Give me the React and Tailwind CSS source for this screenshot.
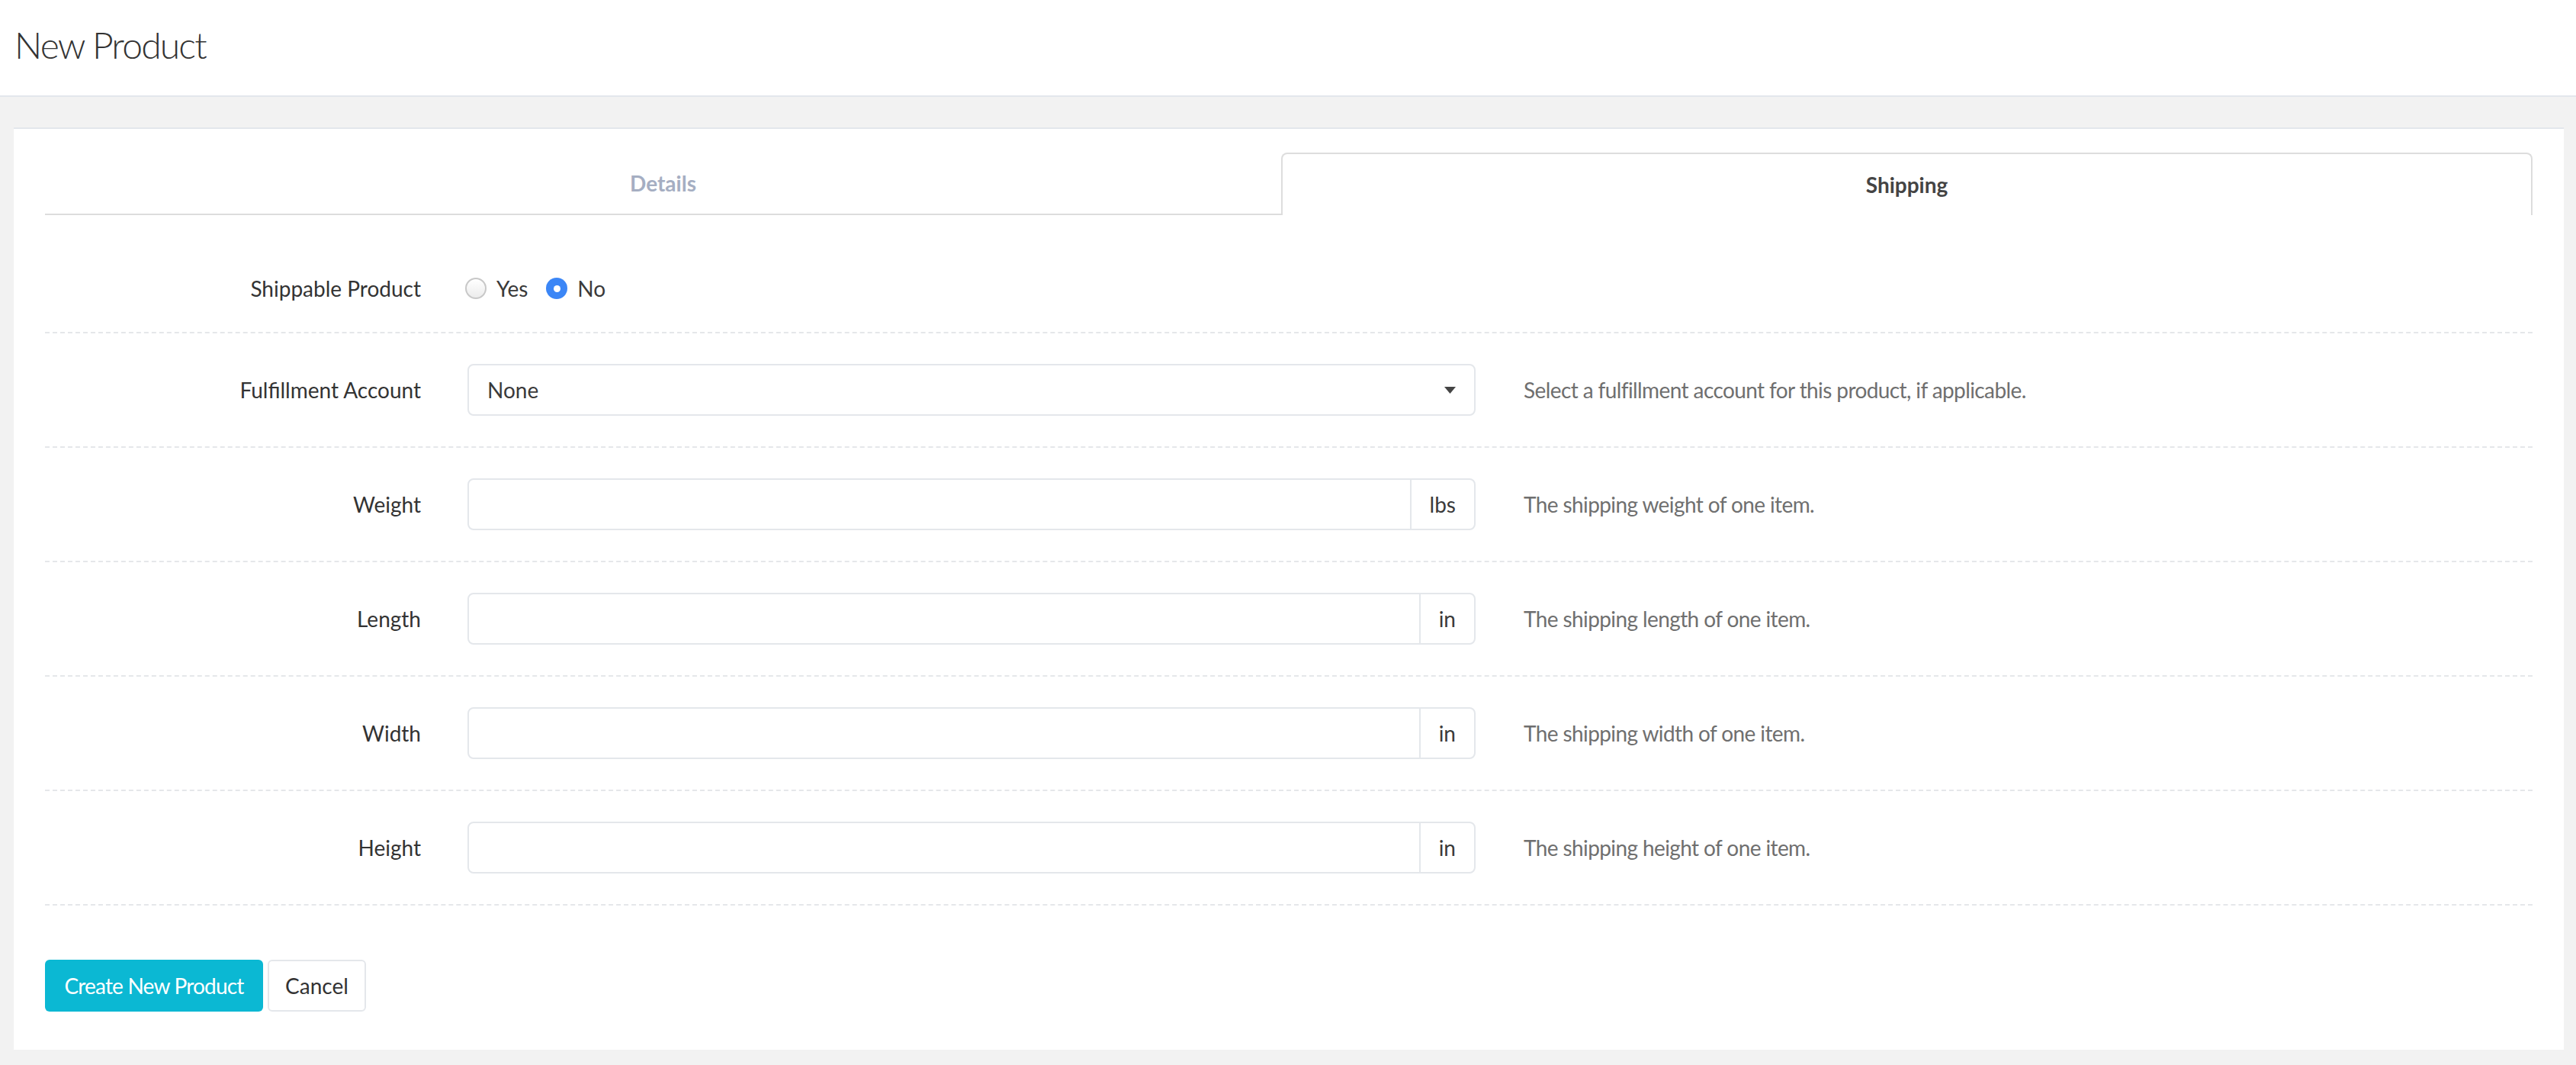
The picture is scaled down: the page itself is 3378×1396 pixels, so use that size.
import React, { useState } from 'react';

const fields = [
    { label: 'Weight', unit: 'lbs', help: 'The shipping weight of one item.' },
    { label: 'Length', unit: 'in', help: 'The shipping length of one item.' },
    { label: 'Width', unit: 'in', help: 'The shipping width of one item.' },
    { label: 'Height', unit: 'in', help: 'The shipping height of one item.' },
];

function Radio({ checked, label, onClick }) {
    return (
        <button type="button" onClick={onClick} className="flex items-center gap-[13px]">
            {checked ? (
                <span className="flex items-center justify-center w-[28px] h-[28px] rounded-full bg-[#3b86f6]">
                    <span className="w-[9px] h-[9px] rounded-full bg-white" />
                </span>
            ) : (
                <span className="w-[28px] h-[28px] rounded-full border-2 border-[#c8c8c8] bg-gradient-to-b from-white to-[#ececec]" />
            )}
            <span className="text-[28px] text-[#3a3a3a]">{label}</span>
        </button>
    );
}

export default function App() {
    const [shippable, setShippable] = useState(false);
    const [values, setValues] = useState({});

    const handleChange = (e) => {
        const { name, value } = e.target;
        setValues((prev) => ({ ...prev, [name]: value }));
    };

    return (
        <div className="min-h-screen bg-[#f2f2f2] font-['Lato',sans-serif] pb-[19px]">
            <header className="h-[127px] bg-white border-b-2 border-[#e3e7ec] flex items-center px-[19px] pb-[8px]">
                <h1 className="text-[48px] font-light tracking-[-1.8px] text-[#333]">New Product</h1>
            </header>

            <div className="ml-[18px] mr-[16px] mt-[40px] bg-white border-t-2 border-[#e3e7ec] px-[41px] pt-[31px] pb-[50px]">
                <div className="grid grid-cols-[1621px_1fr] h-[82px]">
                    <div className="flex items-center justify-center border-b-2 border-[#dddddd] text-[28px] font-bold text-[#a5aec2]">
                        Details
                    </div>
                    <div className="flex items-center justify-center border-2 border-b-0 border-[#dddddd] rounded-t-lg text-[28px] font-bold text-[#444]">
                        Shipping
                    </div>
                </div>

                <div className="mt-[36px] pb-[37px] border-b-2 border-dashed border-[#e5e7ea] flex items-center h-[119px] pt-[40px]">
                    <div className="w-[493px] text-right text-[28px] text-[#333]">Shippable Product</div>
                    <div className="ml-[58px] flex items-center gap-[24px]">
                        <Radio checked={shippable} label="Yes" onClick={() => setShippable(true)} />
                        <Radio checked={!shippable} label="No" onClick={() => setShippable(false)} />
                    </div>
                </div>

                <div className="py-[40px] border-b-2 border-dashed border-[#e5e7ea] flex items-center">
                    <label className="w-[493px] text-right text-[28px] text-[#333]">Fulfillment Account</label>
                    <div className="ml-[61px] w-[1322px] h-[68px] border-2 border-[#e4e7eb] rounded-lg flex items-center justify-between pl-[24px] pr-[24px]">
                        <span className="text-[28px] text-[#3a3a3a]">None</span>
                        <svg width="15" height="9" viewBox="0 0 15 9">
                            <path d="M0 0h15L7.5 9z" fill="#444" />
                        </svg>
                    </div>
                    <p className="ml-[63px] text-[28px] tracking-[-0.6px] text-[#6f6f6f]">
                        Select a fulfillment account for this product, if applicable.
                    </p>
                </div>

                {fields.map((f) => (
                    <div key={f.label} className="py-[40px] border-b-2 border-dashed border-[#e5e7ea] flex items-center">
                        <label className="w-[493px] text-right text-[28px] text-[#333]">{f.label}</label>
                        <div className="ml-[61px] w-[1322px] h-[68px] border-2 border-[#e4e7eb] rounded-lg flex">
                            <input
                                name={f.label}
                                value={values[f.label] || ''}
                                onChange={handleChange}
                                className="flex-1 min-w-0 px-[24px] text-[28px] outline-none bg-transparent"
                            />
                            <span className="flex items-center border-l-2 border-[#e4e7eb] px-[24px] text-[28px] text-[#3a3a3a]">
                                {f.unit}
                            </span>
                        </div>
                        <p className="ml-[63px] text-[28px] tracking-[-0.6px] text-[#6f6f6f]">{f.help}</p>
                    </div>
                ))}

                <div className="mt-[71px] flex gap-[6px]">
                    <button className="w-[286px] h-[68px] rounded-md bg-[#0bb8d3] text-white text-[28px] tracking-[-0.8px]">
                        Create New Product
                    </button>
                    <button className="w-[129px] h-[68px] rounded-md border-2 border-[#e4e7eb] bg-white text-[28px] text-[#333]">
                        Cancel
                    </button>
                </div>
            </div>
        </div>
    );
}
